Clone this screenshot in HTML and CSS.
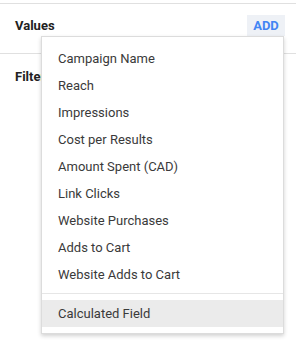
FILE: index.html
```html
<!DOCTYPE html>
<html lang="en">
<head>
<meta charset="UTF-8" />
<title>Values</title>
<link rel="stylesheet" href="styles.css">
</head>
<body>
  <div class="prev"></div>
  <div class="row values">
    <span class="label">Values</span>
    <button class="add">ADD</button>
  </div>
  <div class="row filters">
    <span class="label">Filters</span>
  </div>

  <div class="menu">
    <div class="item">Campaign Name</div>
    <div class="item">Reach</div>
    <div class="item">Impressions</div>
    <div class="item">Cost per Results</div>
    <div class="item">Amount Spent (CAD)</div>
    <div class="item">Link Clicks</div>
    <div class="item">Website Purchases</div>
    <div class="item">Adds to Cart</div>
    <div class="item">Website Adds to Cart</div>
    <div class="divider"></div>
    <div class="item hover">Calculated Field</div>
  </div>
</body>
</html>
```

FILE: styles.css
```css
html, body {
  height: 100%;
}
body {
  margin: 0;
  min-height: 358px;
  background: #fff;
  color: #222;
  font-family: Roboto, "Liberation Sans", sans-serif;
  font-size: 13px;
  position: relative;
}
.prev {
  height: 3px;
  border-bottom: 1px solid #e0e0e0;
}
.row {
  display: flex;
  justify-content: space-between;
  align-items: center;
  padding: 0 11px 0 15px;
}
.values {
  padding-top: 11px;
  height: 38px;
  align-items: flex-start;
  border-bottom: 1px solid #e0e0e0;
}
.filters {
  padding-top: 12px;
}
.label {
  font-weight: 700;
  line-height: 21px;
  color: #222;
}
.add {
  width: 38px;
  height: 21px;
  border: none;
  padding: 0;
  background: #eef1f6;
  color: #4285f4;
  font-family: inherit;
  font-weight: 700;
  font-size: 13px;
}
.menu {
  position: absolute;
  left: 41px;
  top: 36px;
  width: 241px;
  padding: 8px 0 6px;
  background: #fff;
  border: 1px solid #dcdcdc;
  box-shadow: 0 2px 4px rgba(0,0,0,0.18);
}
.item {
  height: 27px;
  line-height: 27px;
  padding-left: 16px;
  color: #3a3a3a;
}
.divider {
  height: 1px;
  background: #e6e6e6;
  margin: 5px 0 6px;
}
.item.hover {
  background: #ebebeb;
}
```
